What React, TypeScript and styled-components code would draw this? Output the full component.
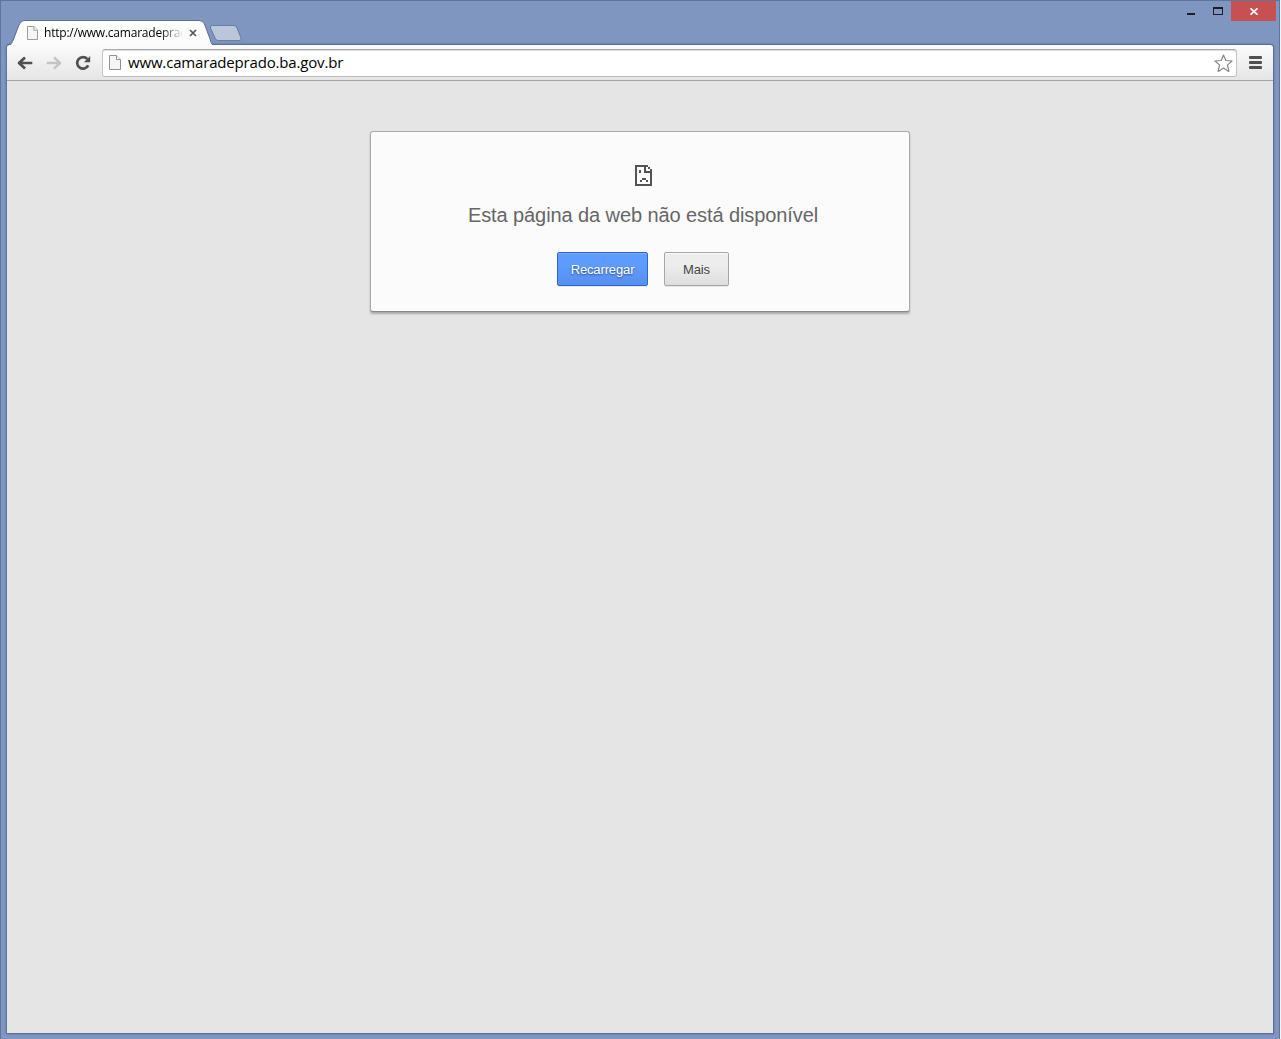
import React from "react";
import styled, { createGlobalStyle } from "styled-components";

const GlobalStyle = createGlobalStyle`
  * { box-sizing: border-box; }
  html, body { margin: 0; padding: 0; background: #f4f4f4; overflow: hidden; }
`;

const Window = styled.div`
  display: flex;
  flex-direction: column;
  width: 1280px;
  height: 1039px;
  padding: 0 5px 5px 5px;
  background: #7f96c0;
  border: 1px solid #60749a;
  border-bottom: 0;
`;

const TitleBar = styled.div`
  display: flex;
  justify-content: space-between;
  height: 43px;
  margin: 0 -2px 0 1px;
`;

const TabStrip = styled.div`
  display: flex;
  align-items: flex-end;
`;

const Tab = styled.div`
  position: relative;
  z-index: 2;
  display: flex;
  align-items: center;
  width: 206px;
  height: 25px;
  margin-bottom: -1px;
  padding: 1px 0 0 20px;
`;

const TabShape = styled.svg`
  position: absolute;
  left: 0;
  top: 0;
  z-index: -1;
`;

const TabTitle = styled.span`
  width: 138px;
  margin-left: 6px;
  overflow: hidden;
  white-space: nowrap;
  font: 12px/18px "Open Sans", "Noto Sans", sans-serif;
  letter-spacing: -0.22px;
  color: #000;
  mask-image: linear-gradient(to right, #000 116px, transparent 140px);
`;

const TabClose = styled.svg`
  margin-left: 7px;
`;

const NewTab = styled.svg`
  margin: 0 0 2px -4px;
`;

const WindowControls = styled.div`
  display: flex;
  align-items: flex-start;
`;

const ControlButton = styled.button<{ $width: number; $close?: boolean }>`
  display: flex;
  align-items: center;
  justify-content: center;
  width: ${(p) => p.$width}px;
  height: 20px;
  padding: 0;
  border: 0;
  background: ${(p) => (p.$close ? "#c75050" : "transparent")};
`;

const Frame = styled.div`
  display: flex;
  flex: 1;
  flex-direction: column;
  border: 1px solid #5c6e94;
  border-left-color: #62759b;
  border-radius: 4px 4px 1px 1px;
  box-shadow: 0 0 2px rgba(50, 70, 115, 0.5);
  overflow: hidden;
`;

const Toolbar = styled.div`
  display: flex;
  align-items: center;
  height: 36px;
  padding: 0 11px 0 3px;
  background: linear-gradient(#fbfbfb, #e5e5e5);
  border-bottom: 1px solid #a6a6a6;
`;

const NavButton = styled.button`
  display: flex;
  align-items: center;
  justify-content: center;
  width: 29px;
  height: 28px;
  padding: 0;
  border: 0;
  background: none;
`;

const AddressBar = styled.div`
  display: flex;
  align-items: center;
  flex: 1;
  height: 28px;
  margin: 0 12px 0 5px;
  padding: 0 3px 0 6px;
  background: #fff;
  border: 1px solid;
  border-color: #aaa #c4c4c4 #bcbcbc;
  border-radius: 3px;
  box-shadow: inset 0 1px 0 #ddd;
`;

const Url = styled.span`
  flex: 1;
  margin: -2px 0 0 7px;
  font: 15px/22px "Open Sans", "Noto Sans", sans-serif;
  letter-spacing: -0.17px;
  color: #000;
`;

const Page = styled.main`
  display: flex;
  flex: 1;
  align-items: flex-start;
  justify-content: center;
  padding-top: 50px;
  background: #e5e5e5;
`;

const ErrorCard = styled.section`
  display: flex;
  flex-direction: column;
  align-items: center;
  width: 540px;
  height: 181px;
  padding: 33px 0 0 6px;
  background: #fbfbfb;
  border: 1px solid #aaa;
  border-bottom-color: #888;
  border-radius: 3px;
  box-shadow: 0 2px 2px #aaa;
`;

const Message = styled.h1`
  margin: 17px 0 25px;
  font: 400 20px/24px "Liberation Sans", Arial, sans-serif;
  letter-spacing: -0.09px;
  color: #666;
  white-space: nowrap;
`;

const Actions = styled.div`
  display: flex;
  gap: 16px;
`;

const ActionButton = styled.button<{ $primary?: boolean }>`
  width: ${(p) => (p.$primary ? 91 : 65)}px;
  height: 34px;
  padding: 0;
  font: 13px "Liberation Sans", Arial, sans-serif;
  letter-spacing: -0.13px;
  color: ${(p) => (p.$primary ? "#fff" : "#444")};
  text-shadow: ${(p) => (p.$primary ? "0 1px 2px rgba(0,0,0,.5)" : "0 1px 0 #f0f0f0")};
  background: ${(p) =>
    p.$primary ? "linear-gradient(#5e9bff 38%, #5690f0)" : "linear-gradient(#ededed 38%, #dedede)"};
  border: 1px solid ${(p) => (p.$primary ? "#2f66c4" : "#a6a6a6")};
  border-radius: 2px;
  box-shadow: 0 1px 0 rgba(0, 0, 0, 0.08),
    inset 0 1px 1px rgba(255, 255, 255, ${(p) => (p.$primary ? 0.2 : 0.75)});
`;

const PageIcon = ({ width, height }: { width: number; height: number }) => (
  <svg width={width} height={height} viewBox="0 0 12 15" preserveAspectRatio="none">
    <path d="M.5.5h7l4 4v10H.5z" fill="#f5f5f5" stroke="#929292" />
    <path d="M7.5.5v4h4" fill="#fff" stroke="#929292" />
  </svg>
);

const BackArrow = ({ color }: { color: string }) => (
  <svg width="16" height="14" viewBox="0 0 16 14" fill="none" stroke={color} strokeWidth="2.7" strokeLinejoin="round">
    <path d="M2 7h13.3M8 1.4L2 7l6 5.600" />
  </svg>
);

const ForwardArrow = ({ color }: { color: string }) => (
  <svg width="16" height="14" viewBox="0 0 16 14" fill="none" stroke={color} strokeWidth="2.4" strokeLinejoin="round">
    <path d="M.7 7H14M8 1.4L14 7l-6 5.600" />
  </svg>
);

const Reload = () => (
  <svg width="16" height="16" viewBox="0 0 16 16">
    <path d="M12.3 4A5.8 5.8 0 1 0 13.2 10.4" fill="none" stroke="#505050" strokeWidth="2.7" />
    <path d="M15.2 1v6.3H8.9z" fill="#505050" />
  </svg>
);

const SadPage = () => (
  <svg width="17" height="21" viewBox="0 0 17 21" shapeRendering="crispEdges" fill="#535353">
    <path fillRule="evenodd" d="M0 0h13v2h2v2h2v17H0zM2 2v17h13V8H9V2z" />
    <path d="M11 2h2v2h2v2h-4z" fill="#fbfbfb" />
    <path d="M4 5h2v3H4zM7 13h4v2H7zM5 15h2v2H5zM11 15h2v2h-2z" />
  </svg>
);

export default function App() {
  return (
    <>
      <GlobalStyle />
      <Window>
        <TitleBar>
          <TabStrip>
            <Tab>
              <TabShape width="206" height="26" viewBox="0 0 206 26">
                <defs>
                  <linearGradient id="tabFill" x1="0" y1="0" x2="0" y2="1">
                    <stop offset="0" stopColor="#fff" />
                    <stop offset="1" stopColor="#fbfbfb" />
                  </linearGradient>
                </defs>
                <path
                  d="M1 26C4 25 5 24 6.500 20L12 5Q14 .5 17 .5H192Q196 .5 197.500 4L203 19Q205 25 206 26Z"
                  fill="url(#tabFill)"
                />
                <path
                  d="M1 25C4 24 5 23 6.500 19L12 5Q14 .5 17 .5H192Q196 .5 197.500 4L203 19Q204 24 206 25"
                  fill="none"
                  stroke="#5c6e94"
                />
              </TabShape>
              <PageIcon width={11} height={14} />
              <TabTitle>http://www.camaradeprado.ba.gov.br</TabTitle>
              <TabClose width="8" height="8" viewBox="0 0 8 8">
                <path d="M1 1l6 6M7 1L1 7" stroke="#555" strokeWidth="1.7" />
              </TabClose>
            </Tab>
            <NewTab width="33" height="17" viewBox="0 0 33 17">
              <path
                d="M3.500 .5H25Q27 .5 28 3L32 13Q33 15.500 30 15.500H9Q7 15.500 6 13L1.500 3Q.5.500 3.500.5Z"
                fill="#bbc6d8"
                stroke="#667ba5"
              />
            </NewTab>
          </TabStrip>
          <WindowControls>
            <ControlButton $width={27} aria-label="Minimizar">
              <svg width="8" height="8"><path d="M0 6h8v2H0z" fill="#1e1e1e" /></svg>
            </ControlButton>
            <ControlButton $width={27} aria-label="Maximizar">
              <svg width="10" height="8"><path fillRule="evenodd" d="M0 0h10v8H0zM1 2v5h8V2z" fill="#1e1e1e" /></svg>
            </ControlButton>
            <ControlButton $width={45} $close aria-label="Fechar">
              <svg width="8" height="7"><path d="M.5.3l7 6.400M7.500.3l-7 6.400" stroke="#fff" strokeWidth="1.7" /></svg>
            </ControlButton>
          </WindowControls>
        </TitleBar>
        <Frame>
          <Toolbar>
            <NavButton aria-label="Voltar"><BackArrow color="#505050" /></NavButton>
            <NavButton aria-label="Avançar"><ForwardArrow color="#c4c4c4" /></NavButton>
            <NavButton aria-label="Recarregar"><Reload /></NavButton>
            <AddressBar>
              <PageIcon width={12} height={15} />
              <Url>www.camaradeprado.ba.gov.br</Url>
              <svg width="19" height="18" viewBox="0 0 19 18">
                <path
                  d="M9.500 1l2.300 5.500 6.200.5-4.600 4.100 1.500 5.900q-.3.500-1 .1L9.500 14l-4.400 3.100q-.7.400-1-.1l1.500-5.900L1 7l6.200-.5z"
                  fill="#fff"
                  stroke="#858585"
                  strokeWidth="1.2"
                  strokeLinejoin="round"
                />
              </svg>
            </AddressBar>
            <svg width="13" height="13" viewBox="0 0 13 13" fill="#505050">
              <rect width="13" height="3" rx="1" />
              <rect y="5" width="13" height="3" rx="1" />
              <rect y="10" width="13" height="3" rx="1" />
            </svg>
          </Toolbar>
          <Page>
            <ErrorCard>
              <SadPage />
              <Message>Esta página da web não está disponível</Message>
              <Actions>
                <ActionButton $primary>Recarregar</ActionButton>
                <ActionButton>Mais</ActionButton>
              </Actions>
            </ErrorCard>
          </Page>
        </Frame>
      </Window>
    </>
  );
}
